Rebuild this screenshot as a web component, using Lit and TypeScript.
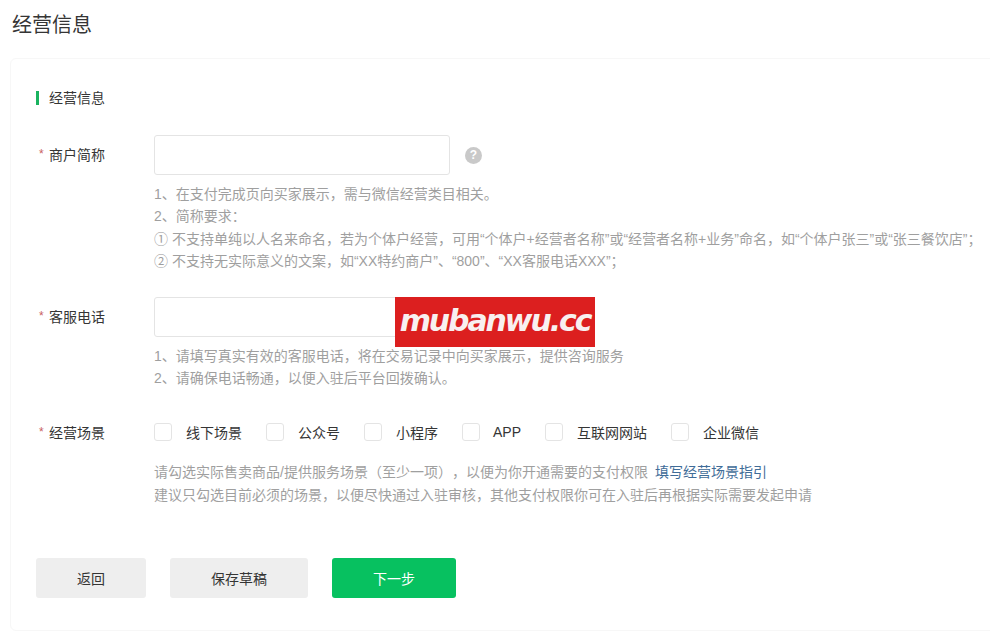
import { LitElement, html, css } from "lit";
import { customElement } from "lit/decorators.js";

@customElement("app-root")
export class AppRoot extends LitElement {
  static styles = css`
    :host {
      display: block;
      position: relative;
      width: 990px;
      height: 644px;
      overflow: hidden;
      background: #fff;
      font-family: "Liberation Sans", "Noto Sans CJK SC", sans-serif;
      font-size: 14px;
      color: #353535;
    }
    h1 {
      margin: 0;
      padding: 12px 0 0 12px;
      height: 58px;
      box-sizing: border-box;
      font-size: 20px;
      line-height: 26px;
      font-weight: 400;
    }
    .card {
      margin-left: 10px;
      width: 1000px;
      height: 573px;
      box-sizing: border-box;
      padding: 32px 25px 0;
      border: 1px solid #f7f7f7;
      border-radius: 6px;
    }
    .section {
      display: flex;
      align-items: center;
      gap: 10px;
      height: 14px;
      line-height: 14px;
    }
    .section i {
      width: 3px;
      height: 14px;
      background: #1ab35f;
    }
    .row {
      display: grid;
      grid-template-columns: 118px 1fr;
    }
    .r1 { margin-top: 30px; }
    .r2 { margin-top: 24px; }
    .r3 { margin-top: 23px; }
    label {
      display: flex;
      height: 38px;
      align-items: center;
      padding-left: 3px;
    }
    .r3 label { height: 40px; }
    label b {
      width: 10px;
      color: #c9605f;
      font-weight: 400;
      font-size: 12px;
    }
    .field {
      display: flex;
      align-items: center;
      gap: 15px;
    }
    .input {
      width: 296px;
      height: 40px;
      box-sizing: border-box;
      border: 1px solid #e4e4e4;
      border-radius: 3px;
      background: #fff;
    }
    .q {
      width: 17px;
      height: 17px;
      border-radius: 50%;
      background: #c9c9c9;
      color: #fff;
      font-size: 12px;
      font-weight: 700;
      line-height: 17px;
      text-align: center;
    }
    .help {
      margin-top: 8px;
      color: #9f9f9f;
      line-height: 22.4px;
      white-space: nowrap;
    }
    .help a { color: #3f6c98; margin-left: 7px; }
    .checks {
      display: flex;
      height: 40px;
      align-items: center;
      gap: 24px;
    }
    .check {
      display: flex;
      align-items: center;
      gap: 14px;
    }
    .check.latin { gap: 13px; }
    .check i {
      width: 18px;
      height: 18px;
      box-sizing: border-box;
      border: 1px solid #e4e4e4;
      border-radius: 3px;
    }
    .scene-help { margin-top: 9px; text-spacing-trim: space-all; }
    .buttons {
      display: flex;
      gap: 24px;
      margin-top: 52px;
    }
    button {
      height: 40px;
      border: 0;
      border-radius: 3px;
      background: #eeeeee;
      color: #353535;
      font: inherit;
      padding: 0;
    }
    .back { width: 110px; }
    .draft { width: 138px; }
    .next { width: 124px; background: #07c160; color: #fff; }
    .mark {
      position: absolute;
      left: 395px;
      top: 297px;
      width: 200px;
      height: 50px;
      background: #dc1f1f;
      color: #f8f0f0;
      font-family: "DejaVu Sans", sans-serif;
      font-size: 30px;
      font-weight: 700;
      font-style: italic;
      line-height: 48px;
      text-align: center;
      white-space: nowrap;
      letter-spacing: -2.1px;
    }
  `;

  render() {
    const scenes = ["线下场景", "公众号", "小程序", "APP", "互联网网站", "企业微信"];
    return html`
      <h1>经营信息</h1>
      <div class="card">
        <div class="section"><i></i>经营信息</div>
        <div class="row r1">
          <label><b>*</b>商户简称</label>
          <div>
            <div class="field"><div class="input"></div><span class="q">?</span></div>
            <div class="help">
              <div>1、在支付完成页向买家展示，需与微信经营类目相关。</div>
              <div>2、简称要求：</div>
              <div>① 不支持单纯以人名来命名，若为个体户经营，可用“个体户+经营者名称”或“经营者名称+业务”命名，如“个体户张三”或“张三餐饮店”；</div>
              <div>② 不支持无实际意义的文案，如“XX特约商户”、“800”、“XX客服电话XXX”；</div>
            </div>
          </div>
        </div>
        <div class="row r2">
          <label><b>*</b>客服电话</label>
          <div>
            <div class="field"><div class="input"></div></div>
            <div class="help">
              <div>1、请填写真实有效的客服电话，将在交易记录中向买家展示，提供咨询服务</div>
              <div>2、请确保电话畅通，以便入驻后平台回拨确认。</div>
            </div>
          </div>
        </div>
        <div class="row r3">
          <label><b>*</b>经营场景</label>
          <div>
            <div class="checks">
              ${scenes.map((s) => html`<span class="check ${s === "APP" ? "latin" : ""}"><i></i>${s}</span>`)}
            </div>
            <div class="help scene-help">
              <div>请勾选实际售卖商品/提供服务场景（至少一项），以便为你开通需要的支付权限<a>填写经营场景指引</a></div>
              <div>建议只勾选目前必须的场景，以便尽快通过入驻审核，其他支付权限你可在入驻后再根据实际需要发起申请</div>
            </div>
          </div>
        </div>
        <div class="buttons">
          <button class="back">返回</button>
          <button class="draft">保存草稿</button>
          <button class="next">下一步</button>
        </div>
      </div>
      <div class="mark">mubanwu.cc</div>
    `;
  }
}
